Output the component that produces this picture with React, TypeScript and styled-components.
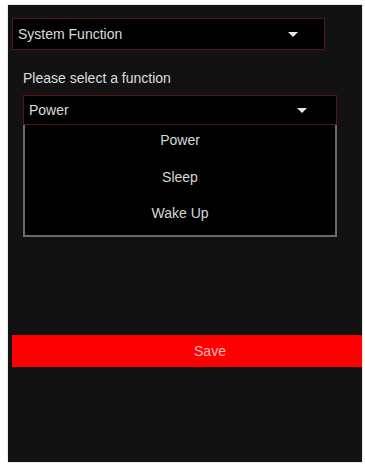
import React from "react";
import styled, { createGlobalStyle } from "styled-components";

const GlobalStyle = createGlobalStyle`
  body {
    margin: 0;
    background: #ffffff;
    font-family: "Liberation Sans", Arial, sans-serif;
  }
`;

const Page = styled.div`
  padding: 5px 3px 3px 8px;
`;

const Panel = styled.div`
  width: 354px;
  height: 457px;
  background: #121212;
  box-sizing: border-box;
  padding: 13px 0 0 4px;
  display: flex;
  flex-direction: column;
  overflow: hidden;
  box-shadow: 0 0 1px #888;
`;

const Select = styled.div<{ $width: number; $height: number }>`
  width: ${(p) => p.$width}px;
  height: ${(p) => p.$height}px;
  box-sizing: border-box;
  background: #000;
  border: 1px solid #5c1318;
  display: flex;
  align-items: center;
  justify-content: space-between;
  padding: 0 26px 0 5px;
  color: #dcdcdc;
  font-size: 14px;
`;

const Arrow = styled.span`
  width: 0;
  height: 0;
  border-left: 5px solid transparent;
  border-right: 5px solid transparent;
  border-top: 5px solid #e8e8e8;
`;

const Field = styled.div`
  margin: 20px 0 0 11px;
  display: flex;
  flex-direction: column;
`;

const Label = styled.div`
  color: #dedede;
  font-size: 14px;
  margin-bottom: 9px;
`;

const Options = styled.ul`
  list-style: none;
  margin: 0;
  padding: 0;
  width: 314px;
  height: 112px;
  box-sizing: border-box;
  background: #000;
  border: 2px solid #6a6a6a;
  border-top: none;
`;

const Option = styled.li`
  height: 36.5px;
  line-height: 30px;
  text-align: center;
  color: #d8d8d8;
  font-size: 14px;
`;

const SaveButton = styled.button`
  margin-top: 98px;
  width: 396px;
  height: 32px;
  border: none;
  background: #ff0000;
  color: #ffb8b8;
  font-family: "Liberation Sans", Arial, sans-serif;
  font-size: 14px;
  text-align: center;
  flex-shrink: 0;
`;

export default function App() {
  return (
    <Page>
      <GlobalStyle />
      <Panel>
        <Select $width={313} $height={32}>
          <span>System Function</span>
          <Arrow />
        </Select>
        <Field>
          <Label>Please select a function</Label>
          <Select $width={314} $height={30} style={{ paddingRight: 29 }}>
            <span>Power</span>
            <Arrow />
          </Select>
          <Options>
            <Option>Power</Option>
            <Option>Sleep</Option>
            <Option>Wake Up</Option>
          </Options>
        </Field>
        <SaveButton>Save</SaveButton>
      </Panel>
    </Page>
  );
}
